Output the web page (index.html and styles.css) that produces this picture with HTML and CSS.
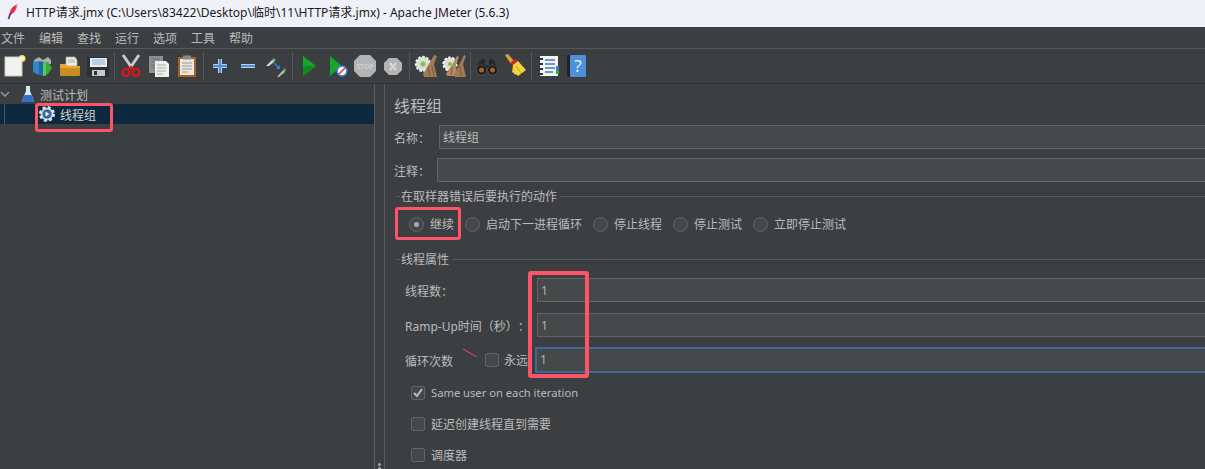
FILE: index.html
```html
<!DOCTYPE HTML>
<html>
<head>
    <title>HTTP请求.jmx - Apache JMeter (5.6.3)</title>
    <meta charset="utf-8" />
    <link rel="stylesheet" href="styles.css">
</head>
<body>

<div class="app">
    <!-- Window title -->
    <div class="titlebar">
        <svg class="title-icon" width="12" height="16" viewBox="0 0 12 16">
            <path d="M10.500 0.500C7 1 3.500 4.500 3 8L2.500 11 5 10C8 8 10 4 10.500 0.500Z" fill="#e0334f"/>
            <path d="M10.500 0.500L8.500 2 9.500 3.500Z" fill="#f0a040"/>
            <path d="M3.500 9L1.500 15" stroke="#6e2f78" stroke-width="1.800" fill="none"/>
        </svg>
        <span>HTTP请求.jmx (C:\Users\83422\Desktop\临时\11\HTTP请求.jmx) - Apache JMeter (5.6.3)</span>
    </div>

    <!-- Menu -->
    <div class="menubar">
        <span>文件</span><span>编辑</span><span>查找</span><span>运行</span><span>选项</span><span>工具</span><span>帮助</span>
    </div>

    <!-- Toolbar -->
    <div class="toolbar">
        <div class="tool"><svg width="24" height="24" viewBox="0 0 24 24"><circle cx="20" cy="4.500" r="3.500" fill="#f3e27a"/><rect x="3" y="3" width="17" height="19" fill="#f2f2ee" stroke="#c9c9c2"/><circle cx="20" cy="4.500" r="2" fill="#fff6b8"/></svg></div>
        <div class="tool"><svg width="24" height="24" viewBox="0 0 24 24"><path d="M4 6l5-3 4 3 5-3 3 3v4H4z" fill="#a9b1ad"/><path d="M3 8l6-1v14l-6-3z" fill="#2f86c9"/><path d="M9 7l5 1v14l-5-1z" fill="#1e6aa8"/><path d="M13 9l5-1 4 6-4 6-5 2z" fill="#35ad3a"/><path d="M13 9l3-.5v13L13 22z" fill="#5cc955"/></svg></div>
        <div class="tool"><svg width="24" height="24" viewBox="0 0 24 24"><path d="M8 3h9l2 3v6H8z" fill="#eeeeea" stroke="#a9a9a5" stroke-width=".7"/><path d="M10 6h7M10 8h7" stroke="#999" stroke-width=".8"/><path d="M2 10h6l2 2h12v8a2 2 0 0 1-2 2H4a2 2 0 0 1-2-2z" fill="#e3a93a"/><path d="M2 14h20v6a2 2 0 0 1-2 2H4a2 2 0 0 1-2-2z" fill="#c98d22"/></svg></div>
        <div class="tool"><svg width="24" height="24" viewBox="0 0 24 24"><path d="M2 3h19l2 2v18H1V4z" fill="#2d2f33"/><rect x="4" y="4" width="17" height="9" fill="#e6edf4"/><path d="M6 6h13M6 8h13M6 10h13" stroke="#8db1d4"/><rect x="6" y="16" width="13" height="6" fill="#c6c8ca"/><rect x="8" y="17" width="3" height="4" fill="#333"/></svg></div>
        <div class="sep"></div>
        <div class="tool"><svg width="24" height="24" viewBox="0 0 24 24"><path d="M4 1l9 13M20 1l-9 13" stroke="#c9cbcd" stroke-width="3" fill="none"/><circle cx="7" cy="18.500" r="3.500" fill="none" stroke="#d4161d" stroke-width="2.400"/><circle cx="17" cy="18.500" r="3.500" fill="none" stroke="#d4161d" stroke-width="2.400"/><path d="M9 15l3-2 3 2" stroke="#d4161d" stroke-width="2" fill="none"/></svg></div>
        <div class="tool"><svg width="24" height="24" viewBox="0 0 24 24"><rect x="2" y="2" width="14" height="17" fill="#8e9092"/><path d="M4 5h9M4 8h9M4 11h9M4 14h9" stroke="#6f7173"/><path d="M8 7h11l3 3v13H8z" fill="#efefeb"/><path d="M10 11h9M10 14h9M10 17h9M10 20h6" stroke="#aaa"/></svg></div>
        <div class="tool"><svg width="24" height="24" viewBox="0 0 24 24"><rect x="3" y="3" width="18" height="20" fill="#a7621f"/><rect x="5" y="5" width="14" height="16" fill="#e9e7df"/><rect x="8" y="1.500" width="8" height="4" fill="#8a8a86"/><path d="M7 9h10M7 12h10M7 15h10M7 18h6" stroke="#9a9a96"/></svg></div>
        <div class="sep"></div>
        <div class="tool"><svg width="24" height="24" viewBox="0 0 24 24"><path d="M12 5v14M5 12h14" stroke="#cfe0f4" stroke-width="4"/><path d="M12 5v14M5 12h14" stroke="#4f8fd8" stroke-width="2.400"/></svg></div>
        <div class="tool"><svg width="24" height="24" viewBox="0 0 24 24"><path d="M5 12h14" stroke="#cfe0f4" stroke-width="4"/><path d="M5 12h14" stroke="#4f8fd8" stroke-width="2.400"/></svg></div>
        <div class="tool"><svg width="24" height="24" viewBox="0 0 24 24"><path d="M2 12l7-7 2 2-6 5z" fill="#d6d6d2"/><path d="M8 6l2-2 2 2-2 2z" fill="#6fb04c"/><path d="M13 23l6-7 2 2-6 5z" fill="#b8bab6"/><path d="M19 16l2-2 1 2-1 2z" fill="#6fb04c"/><path d="M10 9l5 5" stroke="#2f7ed8" stroke-width="1.500"/><path d="M16 11v4h-4z" fill="#2f7ed8"/></svg></div>
        <div class="sep"></div>
        <div class="tool"><svg width="24" height="24" viewBox="0 0 24 24"><path d="M6 2l13 10L6 22z" fill="#18a52c"/><path d="M6 12h13L6 22z" fill="#0f8a20"/></svg></div>
        <div class="tool"><svg width="24" height="24" viewBox="0 0 24 24"><path d="M5 2l12 10L5 22z" fill="#18a52c"/><circle cx="17" cy="17" r="5" fill="#f4f6fa" stroke="#3a78c8" stroke-width="1.500"/><path d="M14 20l6-6" stroke="#d8344a" stroke-width="1.500"/></svg></div>
        <div class="tool"><svg width="24" height="24" viewBox="0 0 24 24"><path d="M7 1h10l6 6v10l-6 6H7l-6-6V7z" fill="#b4b4b4"/><text x="12" y="14.500" class="stop-text">STOP</text></svg></div>
        <div class="tool"><svg width="24" height="24" viewBox="0 0 24 24"><path d="M8 4h8l5 5v7l-5 5H8l-5-5V9z" fill="#b4b4b4"/><path d="M9 9l6 7M15 9l-6 7" stroke="#d6d6d6" stroke-width="2.400"/></svg></div>
        <div class="sep"></div>
        <div class="tool"><svg width="24" height="24" viewBox="0 0 24 24"><circle cx="9" cy="10" r="7" fill="#dcdcd6" stroke="#f2f2ee" stroke-width="2.400" stroke-dasharray="2.500 1.500"/><circle cx="9" cy="10" r="2.500" fill="#84c23e"/><path d="M20 1l3 1-3 8 3 13H10l-1-3 6-10z" fill="#a07b55"/><path d="M14 13l2 9M18 12l2 10" stroke="#7c5a3a"/></svg></div>
        <div class="tool"><svg width="24" height="24" viewBox="0 0 24 24"><circle cx="8" cy="10" r="6.500" fill="#dcdcd6" stroke="#f2f2ee" stroke-width="2.200" stroke-dasharray="2.500 1.500"/><circle cx="8" cy="10" r="2" fill="#84c23e"/><path d="M15 2l2 1-3 8 1 11H5l-1-2 6-9z" fill="#b08d63"/><path d="M22 1l2 1-3 8 3 13H13l-1-2 5-10z" fill="#a07b55"/><path d="M10 13l-1 8M18 12l1 10" stroke="#7c5a3a"/></svg></div>
        <div class="sep"></div>
        <div class="tool"><svg width="24" height="24" viewBox="0 0 24 24"><path d="M4 8l3-3h3v6h4V5h3l3 3 3 8H1z" fill="#26282a"/><circle cx="6.500" cy="16" r="5" fill="#1c1c1c" stroke="#555" stroke-width=".8"/><circle cx="17.500" cy="16" r="5" fill="#1c1c1c" stroke="#555" stroke-width=".8"/><circle cx="6.500" cy="16" r="2.500" fill="#a8602b"/><circle cx="17.500" cy="16" r="2.500" fill="#a8602b"/></svg></div>
        <div class="tool"><svg width="24" height="24" viewBox="0 0 24 24"><path d="M2 1l3-1 6 7-3 3z" fill="#d6a23a"/><path d="M7 9l5-4 3 2-5 5z" fill="#d81f26"/><path d="M10 11l5-4 8 9-8 6-2-2-1 1-2-3-1 1z" fill="#f2d53c"/><path d="M13 12l5 7" stroke="#c9a522"/></svg></div>
        <div class="sep"></div>
        <div class="tool"><svg width="24" height="24" viewBox="0 0 24 24"><rect x="4" y="2" width="18" height="20" fill="#f4f4f0"/><path d="M2 5h5M2 10h5M2 15h5M2 20h5" stroke="#333" stroke-width="2"/><path d="M9 6h10M9 10h10M9 14h10M9 18h8" stroke="#3a78c8" stroke-width="1.500"/><rect x="20" y="12" width="3" height="4" fill="#3a78c8"/><rect x="20" y="16" width="3" height="4" fill="#3aa63f"/></svg></div>
        <div class="tool"><svg width="24" height="24" viewBox="0 0 24 24"><rect x="3" y="1" width="5" height="22" rx="1" fill="#222"/><rect x="6" y="1" width="16" height="22" rx="1" fill="#4f90dc"/><text x="14" y="18" class="help-text">?</text></svg></div>
    </div>

    <div class="main">
        <!-- Test plan tree -->
        <div class="tree">
            <div class="tree-row">
                <svg class="chevron" width="10" height="6" viewBox="0 0 10 6"><path d="M1 1l4 4 4-4" stroke="#9a9c9e" stroke-width="1.400" fill="none"/></svg>
                <svg class="tree-icon" width="14" height="18" viewBox="0 0 14 18"><path d="M5 1h4v5l4 10a1 1 0 0 1-1 1H2a1 1 0 0 1-1-1L5 6z" fill="#dfe6ee"/><path d="M3.500 10h7l2.500 6a1 1 0 0 1-1 1H2a1 1 0 0 1-1-1z" fill="#2f6fc4"/></svg>
                <span>测试计划</span>
            </div>
            <div class="tree-row selected">
                <svg class="tree-icon gear" width="18" height="18" viewBox="0 0 18 18"><circle cx="9" cy="9" r="6.500" fill="#c3c8ce" stroke="#dfe3e7" stroke-width="3" stroke-dasharray="2.800 2.300"/><circle cx="9" cy="9" r="4.500" fill="#2f66a8"/><path d="M7.500 6.500l4 2.500-4 2.500z" fill="#eef2f6"/></svg>
                <span>线程组</span>
            </div>
            <div class="mark mark-tree"></div>
        </div>

        <div class="splitter"><i></i><i></i></div>

        <!-- Thread group form -->
        <div class="panel">
            <h2 class="panel-title">线程组</h2>
            <div class="field name-row">
                <label>名称：</label>
                <div class="input">线程组</div>
            </div>
            <div class="field comment-row">
                <label>注释：</label>
                <div class="input"></div>
            </div>

            <div class="group-title"><span>在取样器错误后要执行的动作</span></div>
            <div class="radios">
                <div class="radio-item"><span class="radio checked"></span>继续</div>
                <div class="radio-item"><span class="radio"></span>启动下一进程循环</div>
                <div class="radio-item"><span class="radio"></span>停止线程</div>
                <div class="radio-item"><span class="radio"></span>停止测试</div>
                <div class="radio-item"><span class="radio"></span>立即停止测试</div>
                <div class="mark mark-radio"></div>
            </div>

            <div class="group-title props-title"><span>线程属性</span></div>
            <div class="props">
                <div class="prop-row">
                    <label>线程数：</label>
                    <div class="input value">1</div>
                </div>
                <div class="prop-row ramp-row">
                    <label>Ramp-Up时间（秒）：</label>
                    <div class="input value">1</div>
                </div>
                <div class="prop-row loop-row">
                    <label class="loop-label">循环次数</label>
                    <span class="box forever-box"></span>
                    <span class="forever">永远</span>
                    <div class="input value focused">1</div>
                </div>
                <div class="mark mark-inputs"></div>
                <svg class="slash" width="16" height="10" viewBox="0 0 16 10"><path d="M1 1l14 8" stroke="#e8455a" stroke-width="1"/></svg>
            </div>

            <div class="checks">
                <div class="check-item"><span class="box checked">
                    <svg width="14" height="14" viewBox="0 0 14 14"><path d="M3 7l3 3 5-7" stroke="#bbbbbb" stroke-width="2" fill="none"/></svg>
                </span><span class="latin">Same user on each iteration</span></div>
                <div class="check-item"><span class="box"></span>延迟创建线程直到需要</div>
                <div class="check-item"><span class="box"></span>调度器</div>
            </div>
        </div>
    </div>
</div>

</body>
</html>
```

FILE: styles.css
```css
/* Base */
body {
    margin: 0;
    background: #3c3f41;
    color: #bbbbbb;
    font-family: "Noto Sans", "Noto Sans CJK SC", sans-serif;
    font-size: 12px;
    text-spacing-trim: space-all;
}

.app {
    width: 1205px;
    height: 469px;
    display: flex;
    flex-direction: column;
    overflow: hidden;
}

/* Title bar */
.titlebar {
    height: 27px;
    flex: none;
    display: flex;
    align-items: center;
    gap: 7px;
    padding-left: 7px;
    background: #eff1f8;
    color: #1a1a1a;
    padding-bottom: 3px;
    box-sizing: border-box;
}

/* Menu */
.menubar {
    height: 22px;
    flex: none;
    box-sizing: border-box;
    display: flex;
    align-items: center;
    gap: 14px;
    padding-left: 1px;
    border-bottom: 1px solid #555759;
}

/* Toolbar */
.toolbar {
    height: 35px;
    flex: none;
    box-sizing: border-box;
    display: flex;
    align-items: center;
    border-bottom: 1px solid #323537;
}

.tool {
    width: 28px;
    height: 28px;
    display: flex;
    align-items: center;
    justify-content: center;
}

.sep {
    width: 1px;
    height: 28px;
    margin: 0 2px;
    background: #55585a;
}

.stop-text {
    font-size: 7px;
    font-weight: bold;
    text-anchor: middle;
    fill: #cfcfcf;
}

.help-text {
    font-size: 17px;
    text-anchor: middle;
    fill: #e6eef8;
}

/* Split layout */
.main {
    flex: 1;
    display: flex;
    min-height: 0;
}

.tree {
    position: relative;
    width: 375px;
    flex: none;
    box-sizing: border-box;
    border-right: 1px solid #5a5c5e;
}

.tree-row {
    height: 20px;
    display: flex;
    align-items: center;
}

.tree-row span {
    padding-top: 2px;
}

.chevron {
    margin-right: 11px;
}

.tree-icon {
    margin-right: 5px;
}

.tree-row.selected {
    position: relative;
    background: #0d293e;
    padding-left: 38px;
    color: #d0d0d0;
}

.tree-row.selected::before {
    content: "";
    position: absolute;
    left: 4px;
    top: 0;
    width: 1px;
    height: 100%;
    background: #4a5862;
}

.gear {
    margin-right: 4px;
}

.splitter {
    position: relative;
    width: 10px;
    flex: none;
    box-sizing: border-box;
    border-right: 1px solid #5a5c5e;
}

.splitter i {
    position: absolute;
    left: 3px;
    width: 3px;
    height: 3px;
    border-radius: 2px;
    background: #a8aaac;
}

.splitter i:first-child {
    bottom: 3px;
}

.splitter i:last-child {
    bottom: -1px;
}

/* Form */
.panel {
    width: 900px;
    flex: none;
    padding: 11px 0 0 9px;
}

.panel-title {
    margin: 0 0 8px;
    font-size: 16px;
    font-weight: normal;
    line-height: 22px;
}

.field {
    display: flex;
    align-items: center;
}

.field label {
    width: 45px;
    flex: none;
    padding-top: 2px;
}

.comment-row {
    margin-top: 9px;
}

.comment-row label {
    width: 43px;
}

.input {
    flex: 1;
    height: 24px;
    box-sizing: border-box;
    padding-left: 3px;
    line-height: 24px;
    background: #45494a;
    border: 1px solid #646464;
}

.group-title {
    display: flex;
    align-items: center;
    margin: 5px 0 0 2px;
    height: 18px;
}

.group-title::before {
    content: "";
    width: 4px;
    height: 1px;
    background: #55585a;
    margin-right: 1px;
}

.group-title::after {
    content: "";
    flex: 1;
    height: 1px;
    margin-left: 3px;
    background: #55585a;
}

.props-title {
    margin-top: 10px;
}

.radios {
    position: relative;
    display: flex;
    align-items: center;
    height: 32px;
    margin-top: 3px;
    padding-left: 15px;
}

.radio-item {
    display: flex;
    align-items: center;
    gap: 6px;
    margin-right: 11px;
}

.radio {
    position: relative;
    width: 15px;
    height: 15px;
    box-sizing: border-box;
    border: 1px solid #646464;
    border-radius: 50%;
    background: #43494a;
}

.radio.checked::after {
    content: "";
    position: absolute;
    left: 4px;
    top: 4px;
    width: 5px;
    height: 5px;
    border-radius: 50%;
    background: #a9a9a9;
}

.props {
    position: relative;
    margin-top: 10px;
    padding-left: 11px;
}

.prop-row {
    display: flex;
    align-items: center;
    height: 24px;
    margin-bottom: 11px;
}

.ramp-row {
    margin-bottom: 10px;
}

.prop-row label {
    width: 132px;
    flex: none;
    padding-top: 2px;
}

.prop-row .value {
    color: #a9b7a4;
}

.prop-row label.loop-label {
    width: 80px;
}

.forever {
    margin-left: 5px;
    width: 33px;
    flex: none;
}

.loop-row {
    height: 26px;
    margin-bottom: 0;
}

.input.focused {
    height: 26px;
    border: 2px solid #3d6a94;
    margin-left: -2px;
    line-height: 22px;
}

.box {
    position: relative;
    display: inline-block;
    width: 12px;
    height: 12px;
    flex: none;
    border: 1px solid #646464;
    border-radius: 2px;
    background: #43494a;
}

.box svg {
    position: absolute;
    left: -1px;
    top: -1px;
}

.latin {
    font-size: 11.2px;
}

.checks {
    padding: 4px 0 0 17px;
}

.check-item {
    display: flex;
    align-items: center;
    gap: 6px;
    height: 31px;
}

/* Red annotation marks drawn over the screenshot */
.mark {
    position: absolute;
    box-sizing: border-box;
    border: 3px solid #ff5468;
    border-radius: 3px;
}

.mark-tree {
    left: 35px;
    top: 19px;
    width: 78px;
    height: 29px;
}

.mark-radio {
    left: 1px;
    top: -1px;
    width: 66px;
    height: 33px;
}

.mark-inputs {
    left: 134px;
    top: -7px;
    width: 61px;
    height: 107px;
    border-width: 4px;
}

.slash {
    position: absolute;
    left: 68px;
    top: 70px;
}
```
